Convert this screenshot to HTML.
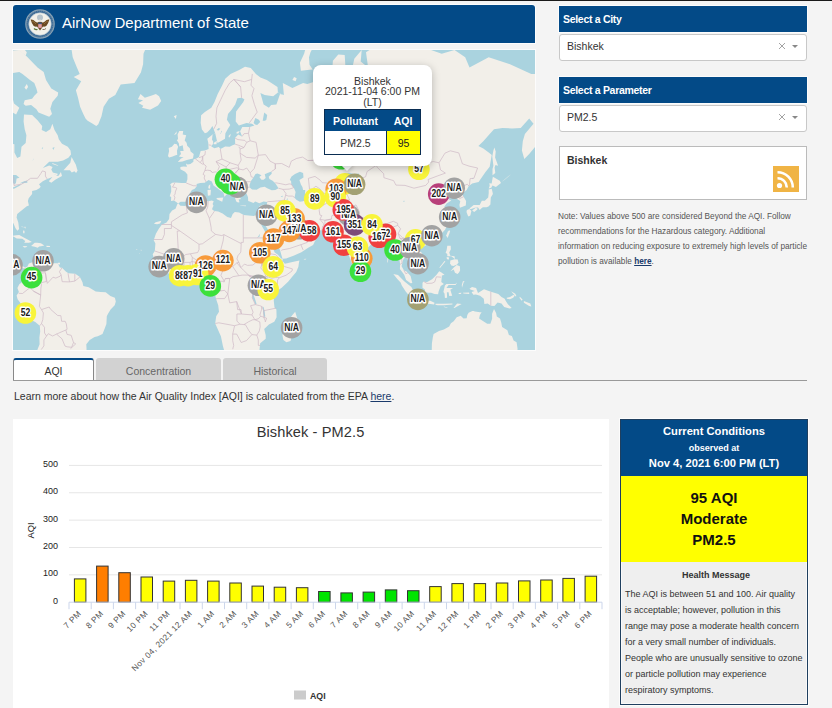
<!DOCTYPE html>
<html><head><meta charset="utf-8">
<style>
*{box-sizing:border-box;margin:0;padding:0}
html,body{width:832px;height:708px;overflow:hidden;background:#f4f4f4;font-family:"Liberation Sans",sans-serif;color:#333}
.abs{position:absolute}
#topline{left:0;top:0;width:832px;height:1px;background:#1a1a1a}
#hdr{left:13px;top:5px;width:522px;height:38px;background:#034a87;border-radius:3px 3px 0 0;box-shadow:0 0 0 1px rgba(255,255,255,0.8)}
#hdr .t{position:absolute;left:49px;top:9px;font-size:15px;color:#fff;white-space:nowrap}
#map{left:13px;top:50px;width:522px;height:300px;background:#aad3df;overflow:hidden;box-shadow:0 0 0 1px rgba(255,255,255,0.7)}
.sel-h{left:559px;width:248px;height:26px;background:#034a87;box-shadow:0 0 0 1px rgba(255,255,255,0.7);color:#fff;font-weight:bold;font-size:10.5px;letter-spacing:-0.3px;padding:7px 0 0 4px;white-space:nowrap}
.sel{left:559px;width:248px;height:27px;background:#fff;border:1px solid #c8c8c8;border-radius:3px;font-size:10.5px;color:#333;padding:5px 0 0 7px}
.sel .x{position:absolute;left:218px;top:7px}
.sel .ar{position:absolute;left:232px;top:10px;width:0;height:0;border-left:3.5px solid transparent;border-right:3.5px solid transparent;border-top:3.5px solid #888}
#cityBox{left:559px;top:146px;width:248px;height:54px;background:#fff;border:1px solid #bbb}
#cityBox .n{position:absolute;left:7px;top:7px;font-weight:bold;font-size:10.5px;color:#333}
#rss{left:773px;top:166px}
#note{left:558px;top:209px;width:274px;white-space:nowrap;font-size:8.25px;line-height:15px;color:#555}
#note a{color:#1a3a6b;font-weight:bold;text-decoration:underline}
.tab{top:358px;height:22px;font-size:10.5px;text-align:center;padding-top:7px;color:#666;background:#d2d2d2;border-radius:3px 3px 0 0}
#tab1{left:13px;width:81px;background:#fff;border:1px solid #888;border-top:2px solid #034a87;border-bottom:none;color:#333;padding-top:5px}
#tabline{left:13px;top:380px;width:794px;height:1px;background:#999}
#learn{left:14px;top:390px;font-size:10.5px;color:#333;white-space:nowrap}
#learn a{color:#1a3a6b;text-decoration:underline}
#chart{left:13px;top:419px;width:596px;height:289px;background:#fff}
#cc{left:620px;top:419px;width:188px;height:286px;border:1px solid #1f3f5f;box-shadow:0 0 0 1px rgba(255,255,255,0.7),inset 0 0 0 1px rgba(255,255,255,0.6);background:#efefef}
#cch{position:absolute;left:0;top:0;width:186px;height:56px;background:#034a87;color:#fff;font-weight:bold;text-align:center}
#ccy{position:absolute;left:0;top:56px;width:186px;height:86px;background:#ffff00;color:#111;font-weight:bold;text-align:center;font-size:15px;line-height:21px;padding-top:10.5px}
#hm{position:absolute;left:0;top:142px;width:186px;font-size:9px;color:#333;padding:0 0 0 4px;white-space:nowrap}

#popup{left:313px;top:65px;width:119px;height:101px;background:#fff;border-radius:8px;box-shadow:0 2px 8px rgba(0,0,0,0.25);font-size:10.5px;color:#333;text-align:center;line-height:10.8px;padding-top:10.5px}
#ptip{left:342px;top:159px;width:10px;height:10px;background:#fff;transform:rotate(45deg);box-shadow:2px 2px 4px rgba(0,0,0,0.15)}
#ptab{position:absolute;left:11px;top:44px;width:97px;height:46px;border:1px solid #0a2d52;border-collapse:collapse}
#ptab .h{position:absolute;left:0;top:0;width:95px;height:21px;background:#034a87;color:#fff;font-weight:bold}
#ptab .r{position:absolute;left:0;top:21px;width:95px;height:23px;background:#fff}
</style></head><body>
<div id="topline" class="abs"></div>
<div id="hdr" class="abs">
  <svg class="abs" style="left:12px;top:4px" width="30" height="30" viewBox="0 0 30 30">
    <circle cx="15" cy="15" r="14.8" fill="#8aa2b4"/>
    <circle cx="15" cy="15" r="13.6" fill="#3f6c96"/>
    <circle cx="15" cy="15" r="13" fill="none" stroke="#9fb6c6" stroke-width="0.5" stroke-dasharray="0.8 1.2"/>
    <circle cx="15" cy="15" r="11.2" fill="#f3f1ea" stroke="#b9c9d4" stroke-width="0.6"/>
    <circle cx="15" cy="8.6" r="3" fill="#b7c4cc"/>
    <path d="M5.6 10.5 Q8 10 10.5 12.8 Q12 14 13 13.2 L15 12.2 L17 13.2 Q18 14 19.5 12.8 Q22 10 24.4 10.5 Q23.5 14 21.5 16.8 Q19.5 18 18 17.5 L15 21.5 L12 17.5 Q10.5 18 8.5 16.8 Q6.5 14 5.6 10.5Z" fill="#6b4a22"/>
    <path d="M7 12 Q9 12.5 11 15 M23 12 Q21 12.5 19 15" stroke="#a07a40" stroke-width="0.7" fill="none"/>
    <rect x="13.2" y="13.6" width="3.6" height="1.6" fill="#3b5a8a"/>
    <rect x="13.2" y="15.2" width="3.6" height="3.6" fill="#d0707a"/>
    <path d="M14 15.2V18.8M15 15.2V19M16 15.2V18.8" stroke="#f4e8e8" stroke-width="0.45"/>
    <path d="M9 19.5 Q10.5 21 12.5 20.5" stroke="#5c7a3a" stroke-width="1.2" fill="none"/>
    <path d="M21 19.5 Q19.5 21 17.5 20.5" stroke="#7a6a50" stroke-width="0.9" fill="none"/>
    <circle cx="15" cy="11.8" r="1.2" fill="#e8e4d8"/>
  </svg>
  <div class="t">AirNow Department of State</div>
</div>
<div id="map" class="abs"><svg width="522" height="300" viewBox="0 0 522 300" style="position:absolute;left:0;top:0">
<rect width="522" height="300" fill="#aad3df"/>
<path fill="#f2efe9" d="M-121.7,23.9 -121.7,203.6 -19.3,204.7 -9.7,208.0 -5.8,213.5 -5.8,214.8 -3.7,215.4 -1.3,217.8 2.1,218.4 5.5,220.4 6.1,218.2 7.4,216.9 10.2,218.2 12.1,219.1 11.9,222.1 11.7,227.5 8.9,232.2 6.3,234.3 4.4,238.1 5.9,242.0 3.6,245.6 4.6,249.3 7.4,253.1 10.6,258.5 14.2,264.6 16.6,269.3 22.3,272.1 26.8,275.7 27.2,281.4 26.4,287.6 26.6,294.2 24.5,299.5 24.5,329.3 74.6,329.3 73.5,298.3 73.3,294.2 76.7,289.9 81.6,287.1 84.8,286.2 89.5,284.1 91.7,278.4 93.4,273.9 93.8,266.2 94.9,264.0 97.6,259.6 101.7,255.3 102.8,251.4 101.9,247.8 97.4,246.0 92.7,242.2 87.8,242.0 82.7,241.5 75.7,237.3 70.3,236.0 69.5,232.2 66.9,227.0 62.2,223.8 55.4,223.2 52.8,221.5 49.0,217.8 46.9,217.6 44.7,213.3 40.5,213.3 36.2,213.5 31.5,213.5 27.7,209.8 24.5,212.4 23.4,210.6 20.6,211.7 15.9,213.5 14.2,216.7 12.1,217.6 8.5,215.6 4.2,216.9 1.4,216.1 -1.6,212.6 -1.1,209.1 -0.5,203.6 -4.3,201.4 -10.7,201.9 -11.4,195.8 -9.7,189.0 -15.9,190.2 -16.1,193.6 -19.3,195.4 -24.6,196.5 -31.0,187.9 -30.4,178.5 -29.9,173.7 -23.5,169.6 -15.0,170.8 -13.3,168.1 -8.6,167.9 -5.0,169.6 -2.2,168.9 0.6,173.7 2.5,178.3 4.4,180.7 6.1,179.0 5.3,172.5 3.6,167.6 4.2,163.9 8.5,160.6 13.8,156.2 15.9,155.4 14.9,150.9 15.7,148.2 19.1,144.1 19.1,141.1 23.4,139.9 26.4,138.2 27.7,136.8 26.0,134.2 29.8,131.3 34.1,128.9 36.2,128.3 39.4,127.1 35.8,131.3 38.3,132.7 42.6,129.5 49.0,126.1 47.9,122.1 45.8,125.5 44.7,126.1 40.5,123.7 38.3,119.6 39.6,117.0 36.2,115.4 29.8,118.0 36.2,111.8 44.7,111.8 50.1,110.5 55.4,107.7 58.0,104.6 57.5,100.4 54.8,96.8 49.0,93.8 45.8,89.2 44.7,85.3 41.5,80.1 39.4,73.7 37.3,79.2 33.0,82.1 28.7,80.1 29.2,75.9 24.5,70.3 19.1,64.9 11.0,64.4 10.6,71.6 11.7,79.2 13.4,85.3 12.7,93.0 8.5,96.8 7.4,106.4 4.2,108.1 1.4,102.5 1.4,94.2 -4.3,93.8 -10.7,89.2 -20.3,86.1 -23.5,80.5 -25.2,77.1 -24.0,70.7 -21.4,66.2 -16.1,59.2 -9.7,54.9 -7.5,44.1 -4.3,42.5 -1.1,32.9 -0.1,28.2 -4.3,25.1 -12.9,32.9 -25.7,35.8 -121.7,23.9Z"/><path fill="#f2efe9" d="M25.5,62.5 36.2,66.7 39.0,63.9 37.3,58.8 39.4,51.9 44.7,45.7 45.2,42.5 38.3,38.6 33.0,30.0 30.7,22.0 24.5,17.5 13.8,6.6 6.3,-0.0 -4.3,0.7 -11.8,10.8 -6.5,20.7 -2.2,23.3 6.3,22.0 9.5,23.9 17.0,30.0 21.3,32.9 23.4,38.6 24.5,42.5 21.3,45.7 19.1,48.8 11.7,50.3 10.6,53.9 12.7,55.8 18.1,54.9 23.4,59.2 25.5,62.5Z"/><path fill="#f2efe9" d="M6.3,57.8 3.1,64.4 -2.2,61.6 -6.9,56.3 -6.0,47.8 -1.1,45.7 1.0,53.4 6.3,57.8Z"/><path fill="#f2efe9" d="M21.3,-34.3 36.2,-20.4 53.3,-18.6 57.5,-7.8 59.7,7.3 63.9,17.5 66.7,23.9 60.7,27.0 68.2,31.2 62.9,40.3 65.0,47.8 67.1,56.8 70.3,63.9 72.5,68.5 74.6,70.7 78.9,73.3 83.3,75.9 85.3,74.2 88.5,66.2 90.6,56.8 95.9,48.8 102.3,45.1 107.7,34.6 121.5,32.9 127.9,22.6 130.1,14.2 130.5,3.7 135.4,-7.8 136.5,-20.4 140.7,-39.4 134.3,-74.7 91.7,-105.5 49.0,-89.2 21.3,-39.4Z"/><path fill="#f2efe9" d="M129.0,57.8 130.3,55.8 125.4,52.9 130.1,50.3 124.9,49.3 127.5,44.1 131.8,47.8 138.0,45.7 142.9,44.1 146.1,46.2 148.2,50.9 145.0,55.4 137.1,59.7 129.0,57.8Z"/><path fill="#f2efe9" d="M164.8,112.1 169.5,111.5 173.8,110.1 180.0,108.4 180.7,103.9 177.6,101.5 176.8,98.2 174.2,95.7 173.6,92.7 171.7,90.4 173.2,85.3 169.7,84.5 170.2,80.9 166.3,80.9 164.6,84.5 165.1,89.2 163.8,90.0 165.9,93.4 166.3,96.4 169.7,95.3 170.6,101.1 167.2,101.1 168.0,103.9 165.9,106.4 170.6,107.4 168.0,108.4 164.8,112.1Z"/><path fill="#f2efe9" d="M164.2,105.0 164.0,100.8 165.1,96.8 163.8,94.2 161.4,93.8 158.9,96.8 155.7,97.9 156.1,101.1 155.0,106.0 156.1,107.4 158.9,106.7 163.3,105.0Z"/><path fill="#f2efe9" d="M165.1,153.6 163.6,152.3 161.0,150.4 158.0,150.9 158.2,146.9 156.7,146.3 158.2,141.4 158.2,136.5 157.2,134.2 159.3,132.7 162.1,132.4 168.5,133.0 173.2,133.0 174.4,129.2 174.4,124.6 172.1,121.8 167.4,119.3 167.4,117.0 170.6,116.4 174.0,116.7 172.9,113.5 174.7,114.4 177.4,114.1 180.4,111.8 180.4,109.4 183.4,108.4 186.0,107.1 186.8,103.9 187.7,101.1 191.9,100.4 195.6,99.0 195.3,93.0 194.3,88.8 199.6,84.5 202.2,83.3 200.7,79.2 199.4,75.9 197.3,79.2 194.1,82.5 191.9,83.3 188.9,79.6 187.7,72.9 188.1,65.3 191.9,62.1 198.3,57.8 201.5,51.9 204.7,44.1 209.0,35.8 212.2,28.8 217.5,23.9 226.1,20.1 232.0,16.8 237.8,18.1 242.9,23.9 247.4,27.6 253.8,30.0 264.5,36.9 264.9,42.5 270.9,45.1 269.8,32.9 275.1,35.8 279.4,38.1 290.1,32.9 294.3,34.1 302.9,31.2 306.1,25.1 313.5,28.2 319.9,32.3 323.1,34.6 319.3,18.8 319.9,10.8 325.3,4.4 331.7,5.1 332.3,14.2 331.7,27.0 333.8,32.9 337.0,28.8 341.3,8.7 348.7,-0.0 347.7,11.4 355.1,17.5 353.0,2.2 362.6,-3.8 369.0,-16.0 386.1,-22.1 398.9,-36.3 418.1,-0.0 428.7,3.7 441.5,-0.0 452.2,7.3 456.5,17.5 475.7,7.3 497.0,14.2 518.3,23.9 539.7,23.9 582.3,35.8 582.3,66.2 529.0,75.0 525.8,91.2 522.2,96.8 516.2,103.9 511.3,109.1 508.9,100.4 509.8,91.2 511.9,84.1 520.5,73.7 516.2,68.5 507.7,78.0 499.1,78.4 489.5,78.0 481.0,79.2 476.7,84.1 470.3,91.2 465.4,96.0 470.3,98.6 476.7,103.2 478.7,105.0 476.7,116.7 472.5,122.1 465.6,131.9 459.2,133.6 455.8,135.9 453.7,139.9 450.1,142.7 449.0,144.1 453.1,150.9 452.8,155.4 446.9,157.8 446.4,154.9 447.3,150.9 443.7,148.8 442.6,143.3 436.8,144.1 435.6,146.1 437.7,141.4 435.1,140.5 431.9,143.3 428.3,145.5 430.4,150.1 434.5,148.8 438.3,150.4 433.6,153.6 431.3,156.7 434.7,162.6 437.1,166.4 437.1,169.1 434.7,174.0 432.1,179.7 427.7,184.2 420.8,186.9 414.9,189.0 412.3,191.3 411.0,189.0 407.4,189.0 404.6,191.8 402.7,194.9 405.3,200.3 409.1,203.0 410.2,209.1 409.5,211.7 404.8,213.9 401.2,217.6 400.6,213.7 397.8,213.3 395.2,209.8 392.3,207.1 390.1,209.8 388.6,216.3 391.0,220.4 393.5,221.5 397.6,226.0 399.3,233.0 397.6,233.2 393.1,230.0 391.2,224.7 386.9,219.1 387.1,214.3 385.2,200.3 380.3,201.9 378.2,200.7 378.6,194.7 373.7,190.2 373.1,186.9 370.1,187.9 366.9,188.3 362.4,190.6 359.4,192.9 352.6,200.3 348.3,201.9 348.3,207.4 347.2,213.9 343.8,216.9 342.3,218.7 339.8,215.2 337.0,208.5 333.4,198.1 332.3,194.7 331.9,189.7 327.4,190.6 324.2,186.9 326.3,186.0 322.9,184.2 319.9,181.4 318.4,179.7 308.2,180.4 299.2,179.0 297.1,175.9 297.3,177.8 298.0,182.5 302.0,184.2 304.6,186.7 301.8,191.5 300.1,194.9 295.2,197.8 288.4,202.3 280.5,205.8 273.0,208.5 269.8,208.7 269.4,210.9 271.9,213.7 279.4,212.0 286.4,210.6 285.8,213.7 285.4,216.7 283.2,222.1 279.4,226.4 275.1,231.7 268.7,237.7 265.7,239.8 262.8,242.4 260.8,246.7 260.8,251.0 261.5,257.4 263.4,259.6 263.6,267.3 261.3,271.7 255.9,274.6 251.2,279.1 252.7,285.3 252.7,288.8 247.2,293.2 246.5,299.5 245.3,315.8 215.4,315.8 209.9,295.9 207.9,286.2 202.2,273.5 203.2,266.2 206.0,261.8 205.2,255.3 203.0,248.8 202.2,245.6 197.3,240.3 196.8,236.0 197.9,229.6 197.3,227.5 195.1,226.2 190.9,226.8 186.6,222.5 184.3,222.3 179.6,223.0 172.7,226.0 168.5,224.9 161.0,226.6 156.7,224.2 152.5,221.2 148.6,217.8 145.0,212.8 141.2,209.1 139.7,204.3 141.8,201.0 142.4,193.6 140.7,190.2 142.9,183.7 146.1,178.3 148.8,174.7 153.5,172.5 156.1,169.1 156.5,163.9 159.1,160.6 162.5,158.8 164.4,154.1 165.1,153.6Z"/>
<path fill="#aad3df" d="M165.1,153.6 167.6,151.7 172.5,151.7 175.5,149.3 177.4,146.1 176.4,144.1 178.9,139.9 181.7,138.8 183.8,136.2 183.6,133.9 187.2,133.0 191.7,132.7 195.6,130.1 198.8,131.6 200.5,135.4 203.7,137.7 207.3,140.5 210.5,142.7 211.6,147.4 210.3,148.2 212.4,145.8 213.7,144.4 213.1,141.6 216.5,142.5 215.4,140.8 213.1,139.4 210.7,137.4 207.9,136.5 205.8,132.4 203.2,129.8 203.5,127.1 206.0,126.1 206.7,128.9 209.0,130.4 212.0,132.7 216.5,135.9 218.6,137.7 218.4,141.9 220.1,144.1 221.8,147.4 223.3,151.5 225.0,152.5 226.5,152.3 225.6,149.6 228.2,149.1 226.1,146.9 225.9,141.1 228.2,140.8 232.5,140.5 232.9,142.7 234.0,144.7 235.0,147.2 235.2,150.9 237.4,151.7 240.4,153.1 242.3,151.5 246.3,153.3 250.6,151.5 254.2,152.0 253.6,155.4 252.7,159.0 251.7,161.9 250.2,165.6 245.9,165.9 243.1,164.9 240.8,165.9 235.7,165.6 230.8,164.9 226.1,162.4 221.8,161.9 219.7,163.9 218.0,168.1 214.3,166.9 209.6,163.4 205.2,161.6 201.5,161.1 199.4,159.8 199.2,158.5 200.5,155.7 199.6,154.1 200.7,151.2 198.8,150.4 195.3,151.2 190.9,150.7 183.4,151.5 179.6,152.3 175.7,154.1 172.3,155.9 167.4,155.7 165.7,153.8 165.1,153.6Z"/><path fill="#aad3df" d="M239.1,139.4 236.7,137.4 236.5,135.1 238.0,131.0 240.4,127.4 242.5,124.0 244.6,123.4 248.5,125.2 246.3,127.1 248.5,129.8 250.6,129.8 252.7,128.0 252.3,126.4 251.7,124.3 255.1,122.8 258.5,121.5 258.7,123.7 255.7,126.8 256.4,128.9 259.6,130.7 262.1,133.0 265.5,138.2 262.3,139.9 258.7,140.2 254.2,138.2 251.7,136.8 247.4,137.4 243.6,139.7 239.1,139.4Z"/><path fill="#aad3df" d="M276.8,129.8 278.5,126.4 282.0,124.0 286.9,121.8 290.1,123.1 290.5,127.4 286.4,130.1 287.9,134.5 289.4,137.1 290.1,139.9 292.2,139.9 292.0,144.7 292.0,150.1 290.1,151.2 286.9,151.7 283.7,149.9 281.5,147.7 282.6,141.9 280.9,138.0 278.3,134.2 278.1,131.3 276.8,129.8Z"/><path fill="#aad3df" d="M199.6,84.5 199.0,89.6 200.3,91.9 198.3,96.4 201.5,98.2 205.8,97.1 207.5,99.0 212.2,96.4 216.7,96.8 219.5,95.3 222.2,94.2 222.0,88.1 225.2,84.5 229.1,86.5 227.1,81.3 229.3,77.1 236.7,77.1 241.4,75.5 238.9,73.7 233.5,72.9 225.9,75.5 222.7,71.6 223.1,61.6 230.3,51.9 231.4,49.3 228.6,47.8 224.4,48.3 222.2,54.4 218.6,59.7 215.0,63.9 213.9,69.8 217.3,75.0 215.4,78.0 212.4,83.3 212.0,88.8 207.7,91.2 204.5,93.0 203.9,90.4 202.2,83.3 199.6,84.5Z"/><path fill="#aad3df" d="M264.9,42.5 260.2,46.2 251.7,45.1 247.4,43.0 250.6,54.4 255.9,57.8 258.1,54.9 263.4,54.4 267.0,44.1 270.9,45.1 264.9,42.5Z"/><path fill="#aad3df" d="M280.5,168.9 283.9,169.1 285.4,171.6 286.7,174.0 290.1,176.6 293.9,177.3 297.1,175.7 297.3,177.8 296.5,180.2 295.0,180.4 293.3,182.5 289.2,182.8 287.1,182.8 287.1,179.0 286.0,178.3 285.4,181.4 284.1,179.0 282.8,176.4 280.5,173.3 279.4,170.3 280.5,168.9Z"/><path fill="#aad3df" d="M246.5,169.1 248.5,173.3 250.2,174.2 251.5,170.1 251.0,173.7 252.7,176.1 256.4,182.1 259.3,186.7 260.6,189.0 263.4,193.6 267.0,199.9 268.3,204.7 269.6,208.9 269.2,209.1 267.7,208.0 264.9,204.7 261.7,202.5 259.8,198.1 256.8,193.6 256.4,190.2 253.8,186.7 252.9,183.5 250.6,179.0 248.7,175.7 246.5,169.1Z"/>
<path fill="#f2efe9" d="M347.2,218.7 347.9,215.0 350.4,217.8 351.7,220.6 351.1,222.5 348.9,223.4 347.7,222.1Z"/><path fill="#f2efe9" d="M408.7,194.3 411.9,192.2 413.8,193.3 412.5,195.8 410.6,196.5 408.7,195.6Z"/><path fill="#f2efe9" d="M433.2,185.6 434.5,187.9 435.1,186.7 436.4,183.2 437.1,180.9 436.2,180.2 434.7,181.8Z"/><path fill="#f2efe9" d="M434.3,195.8 437.7,195.8 437.9,199.2 436.2,202.5 437.3,205.8 441.5,206.3 442.0,208.9 438.3,206.3 436.6,206.3 434.3,206.3 434.3,204.1 432.6,202.7 433.6,200.3Z"/><path fill="#f2efe9" d="M433.6,206.9 436.2,207.6 435.6,209.8 433.9,208.9Z"/><path fill="#f2efe9" d="M427.0,218.0 432.4,211.5 431.5,211.1 426.4,217.4Z"/><path fill="#f2efe9" d="M437.3,210.6 441.5,209.3 444.7,209.6 445.4,212.4 444.1,214.6 440.5,216.1 438.3,215.6 437.1,213.3Z"/><path fill="#f2efe9" d="M437.5,221.2 440.5,217.8 443.7,215.0 446.9,216.3 447.1,220.4 446.0,222.5 444.5,224.0 442.0,222.7 440.7,219.5Z"/><path fill="#f2efe9" d="M409.5,232.8 410.8,231.5 413.8,232.2 419.1,229.2 423.4,224.9 426.2,221.2 428.1,222.3 431.5,224.7 428.9,225.5 428.3,231.9 430.9,234.1 427.7,236.0 425.7,241.3 425.1,244.3 421.5,244.1 418.1,242.8 415.3,242.8 412.1,242.2 411.9,239.6 409.5,237.7Z"/><path fill="#f2efe9" d="M380.3,224.0 385.0,224.9 391.2,231.3 398.4,236.9 399.9,240.1 403.1,242.4 402.9,248.4 400.1,248.6 395.2,244.5 392.7,241.5 388.8,235.6 387.6,232.4 384.1,228.7Z"/><path fill="#f2efe9" d="M401.4,250.5 403.3,248.6 408.0,249.5 412.5,250.8 417.2,250.8 421.5,252.7 421.1,254.6 413.8,253.6 407.4,252.7 401.9,251.0Z"/><path fill="#f2efe9" d="M422.5,253.8 430.9,253.8 439.4,253.6 439.4,254.6 430.9,255.3 424.5,255.3 422.5,254.8Z"/><path fill="#f2efe9" d="M441.5,257.9 448.6,254.0 444.1,253.6 440.5,258.1Z"/><path fill="#f2efe9" d="M430.9,256.4 434.7,257.7 434.1,258.1 430.9,257.0Z"/><path fill="#f2efe9" d="M430.4,242.0 431.9,235.4 433.4,234.1 442.4,233.9 444.1,232.6 442.6,235.1 435.6,235.1 433.4,237.9 436.4,237.9 440.0,237.9 437.3,239.8 439.2,245.8 436.2,246.0 435.6,242.2 433.9,242.2 434.1,247.8 431.9,248.0 431.5,243.5Z"/><path fill="#f2efe9" d="M449.0,237.7 450.5,232.8 451.6,231.1 449.9,231.3 448.8,234.9Z"/><path fill="#f2efe9" d="M449.9,242.8 456.0,242.4 456.3,244.1 450.5,243.5Z"/><path fill="#f2efe9" d="M445.6,243.0 448.4,242.8 447.9,244.1 445.8,243.9Z"/><path fill="#f2efe9" d="M456.5,238.8 459.0,236.9 463.1,237.9 465.0,243.0 471.0,239.2 477.2,241.5 485.3,244.1 488.5,247.1 491.7,248.8 492.5,250.5 494.9,254.2 498.7,258.1 496.4,258.5 491.2,257.0 488.5,253.6 484.6,252.5 481.4,255.9 478.0,255.7 474.6,253.6 471.4,254.0 470.8,248.8 467.1,245.8 462.9,244.5 460.3,244.8 458.6,242.0 461.8,240.9 457.5,239.4Z"/><path fill="#f2efe9" d="M493.8,247.8 497.0,247.1 500.2,245.0 501.9,245.6 500.2,247.8 497.0,249.3 493.8,248.8Z"/><path fill="#f2efe9" d="M498.1,241.3 502.3,243.7 503.4,246.0 502.8,246.5 500.2,243.7Z"/><path fill="#f2efe9" d="M506.8,246.7 509.6,249.5 508.7,250.8 506.6,248.0Z"/><path fill="#f2efe9" d="M510.9,251.0 517.3,253.6 518.3,256.4 516.2,256.1 510.9,252.7Z"/><path fill="#f2efe9" d="M418.9,293.5 419.8,287.6 420.6,284.1 426.0,280.9 430.9,279.6 436.2,276.4 437.9,273.3 440.7,271.3 443.7,267.3 447.7,265.7 450.5,268.4 453.7,268.2 454.3,265.1 455.6,262.7 459.9,260.7 458.4,260.3 462.0,261.4 466.9,262.2 468.6,262.2 466.9,265.1 466.1,268.4 470.3,271.3 474.2,273.7 477.4,273.7 479.1,268.8 479.1,263.8 481.0,259.0 483.1,262.9 483.8,266.6 487.0,268.4 488.3,272.8 489.1,277.1 494.4,280.2 495.9,285.1 498.9,286.0 500.6,290.4 503.6,292.3 504.5,298.3 504.5,329.3 418.1,329.3Z"/><path fill="#f2efe9" d="M282.2,261.8 284.5,269.5 283.0,272.8 281.3,278.0 278.5,287.6 277.5,290.9 273.4,292.3 270.4,289.9 269.4,285.3 271.7,279.1 270.9,274.6 271.7,271.0 275.8,269.9 279.2,265.3Z"/><path fill="#f2efe9" d="M290.7,209.1 293.3,208.7 292.8,209.6 291.1,209.6Z"/><path fill="#f2efe9" d="M456.3,159.0 457.3,157.8 460.7,154.9 466.7,154.9 468.8,150.7 471.8,150.7 475.2,147.4 475.7,143.3 475.7,139.4 478.7,138.8 479.5,141.9 479.9,144.1 477.8,147.4 477.6,150.9 477.4,154.4 475.5,156.5 473.5,157.2 469.9,157.2 468.8,158.0 466.7,160.1 465.0,157.5 461.8,157.8 458.2,159.0Z"/><path fill="#f2efe9" d="M453.9,160.1 456.5,159.0 458.4,161.1 457.3,165.4 455.6,166.4 454.8,165.6 453.5,162.1Z"/><path fill="#f2efe9" d="M459.2,160.6 462.4,158.0 464.4,158.3 464.4,159.6 461.2,161.9Z"/><path fill="#f2efe9" d="M475.7,138.5 478.2,137.7 479.5,135.4 482.9,137.1 488.0,133.0 486.8,130.7 479.9,126.8 479.1,130.7 478.7,133.6 476.3,133.3 476.7,135.7Z"/><path fill="#f2efe9" d="M479.5,125.2 482.3,123.1 481.6,117.4 482.5,115.1 485.1,115.7 482.1,107.4 482.7,101.5 481.4,97.5 480.4,100.4 479.3,106.4 480.4,115.7 479.5,119.0Z"/><path fill="#f2efe9" d="M287.9,20.7 294.3,20.1 299.7,19.4 296.5,14.8 296.0,7.3 297.5,2.2 302.9,-7.8 309.3,-17.7 322.1,-28.6 318.9,-31.4 302.9,-22.1 294.3,-7.8 291.1,3.7 286.9,12.8Z"/><path fill="#f2efe9" d="M301.8,23.9 306.1,25.1 307.1,22.0 302.9,20.7Z"/><path fill="#f2efe9" d="M279.4,30.0 282.6,31.2 283.7,28.2 281.1,27.0Z"/><path fill="#f2efe9" d="M-4.1,188.1 -0.5,185.8 3.1,185.3 6.3,185.1 11.7,188.1 15.5,189.9 18.9,192.0 15.7,192.7 11.2,192.7 12.3,191.1 9.3,188.8 3.8,188.6 0.4,186.5Z"/><path fill="#f2efe9" d="M18.1,196.1 21.7,192.7 24.3,192.7 27.9,193.3 31.3,195.6 29.4,196.1 26.2,196.5 24.7,197.8 21.7,196.7Z"/><path fill="#f2efe9" d="M9.7,196.1 14.4,196.3 13.2,197.2 11.2,197.4Z"/><path fill="#f2efe9" d="M33.4,195.8 37.1,196.1 36.8,197.0 33.6,197.0Z"/><path fill="#f2efe9" d="M10.0,180.4 11.5,180.7 11.5,183.2 10.2,183.2Z"/><path fill="#f2efe9" d="M8.5,176.6 10.8,176.9 10.8,177.3 8.5,177.1Z"/><path fill="#f2efe9" d="M11.7,176.4 12.7,177.1 12.3,178.8 11.5,177.6Z"/><path fill="#f2efe9" d="M44.9,212.8 47.1,212.8 46.9,214.6 44.9,214.3Z"/><path fill="#f2efe9" d="M50.5,120.2 57.3,112.8 58.6,107.1 62.9,114.8 63.9,118.6 64.6,120.6 63.1,123.1 61.4,121.2 58.8,122.4 56.9,120.2Z"/><path fill="#f2efe9" d="M39.4,113.1 45.4,115.4 44.7,115.7 39.4,114.1Z"/><path fill="#f2efe9" d="M39.6,122.4 44.7,123.7 44.3,125.2 40.0,124.3Z"/><path fill="#f2efe9" d="M11.5,37.5 13.8,34.1 15.1,36.9 13.2,39.7Z"/><path fill="#f2efe9" d="M5.3,-0.0 12.7,5.8 13.8,2.2 10.6,-1.5Z"/><path fill="#f2efe9" d="M203.5,148.0 210.3,147.4 209.2,151.7 203.9,149.3Z"/><path fill="#f2efe9" d="M194.5,139.9 197.9,139.7 197.5,145.2 194.9,145.8Z"/><path fill="#f2efe9" d="M195.3,138.2 197.1,138.8 197.3,134.2 195.6,135.7Z"/><path fill="#f2efe9" d="M227.1,155.4 233.1,155.4 232.7,156.2 227.3,155.7Z"/><path fill="#f2efe9" d="M245.9,156.5 250.8,154.4 249.5,156.2 247.4,157.2Z"/><path fill="#f2efe9" d="M181.9,143.9 184.5,143.0 183.8,144.7 182.3,144.4Z"/><path fill="#f2efe9" d="M200.5,93.0 203.9,90.8 203.5,94.2 200.9,94.2Z"/><path fill="#f2efe9" d="M197.7,93.0 200.0,92.7 199.4,94.9 197.9,94.5Z"/><path fill="#f2efe9" d="M215.6,86.1 217.7,83.7 217.3,86.1 216.0,87.7Z"/><path fill="#f2efe9" d="M223.5,82.1 226.7,80.9 225.6,83.3 223.7,83.7Z"/><path fill="#f2efe9" d="M161.0,84.9 163.8,81.3 163.3,84.1Z"/><path fill="#f2efe9" d="M140.9,173.7 142.7,172.3 148.4,170.8 147.1,173.5 144.1,174.2Z"/><path fill="#f2efe9" d="M123.2,199.0 124.5,199.4 123.7,200.1Z"/><path fill="#f2efe9" d="M127.9,199.6 128.6,200.3 127.9,201.0Z"/><path fill="#f2efe9" d="M126.4,203.0 127.1,203.4 126.4,203.8Z"/><path fill="#f2efe9" d="M160.8,66.2 163.6,64.9 162.9,68.9Z"/><path fill="#f2efe9" d="M374.5,206.7 375.4,206.7 375.0,211.3 374.3,213.3Z"/><path fill="#f2efe9" d="M488.5,131.9 494.7,126.8 498.1,124.3 491.7,129.8Z"/>
<path fill="#aad3df" d="M-19.3,123.1 -13.9,119.0 -11.8,116.4 -7.5,116.7 -3.9,121.5 -3.9,123.7 -7.5,123.7 -12.9,122.4Z"/><path fill="#aad3df" d="M-10.3,138.0 -9.7,129.8 -5.6,125.2 -3.9,125.8 -6.9,130.4 -7.5,135.7 -8.8,138.2Z"/><path fill="#aad3df" d="M-3.3,125.2 3.1,124.9 6.5,127.7 3.6,128.6 2.9,133.3 1.0,134.2 -1.1,131.3 -3.3,126.8Z"/><path fill="#aad3df" d="M-0.9,138.0 5.3,135.1 8.7,134.5 5.3,136.5 1.0,138.8Z"/><path fill="#aad3df" d="M6.8,133.3 11.7,131.0 14.2,130.7 14.4,132.7 9.5,133.3Z"/><path fill="#aad3df" d="M244.8,235.4 248.5,235.1 250.2,236.4 249.5,238.6 248.5,241.3 245.9,241.5 244.6,239.2Z"/><path fill="#aad3df" d="M239.3,243.0 239.9,243.0 242.1,249.3 243.6,254.0 242.3,254.6 241.0,251.0 239.3,247.8Z"/><path fill="#aad3df" d="M249.5,256.4 250.6,257.0 251.5,260.7 252.3,266.6 251.2,267.0 250.2,262.9 250.0,258.5Z"/><path fill="#aad3df" d="M253.6,226.2 254.4,226.6 254.9,230.7 254.2,230.9Z"/><path fill="#aad3df" d="M398.4,107.1 401.0,106.7 405.3,103.6 410.6,96.8 411.0,92.3 410.0,93.0 407.8,98.6 404.2,102.2 399.9,105.0Z"/><path fill="#aad3df" d="M333.8,123.7 335.9,122.8 341.3,124.0 346.0,123.4 345.1,126.1 340.2,125.2 335.9,127.1Z"/><path fill="#aad3df" d="M339.6,135.9 342.3,134.5 343.8,135.4 341.3,136.5Z"/><path fill="#aad3df" d="M240.6,72.9 242.3,68.0 245.9,69.8 247.2,72.0 244.2,75.0 242.1,74.6Z"/><path fill="#aad3df" d="M249.7,70.7 251.2,62.5 254.2,64.9 253.4,69.8 252.1,70.7Z"/><path fill="#aad3df" d="M203.5,80.1 205.6,78.0 207.3,78.8 205.6,80.5Z"/><path fill="#aad3df" d="M207.3,84.1 208.6,80.5 208.8,81.3 207.7,84.1Z"/><path fill="#aad3df" d="M244.0,188.3 247.2,183.5 246.5,186.3Z"/><path fill="#aad3df" d="M205.8,208.0 207.9,206.5 208.6,208.0 206.9,208.9Z"/><path fill="#aad3df" d="M175.9,222.1 177.4,221.0 176.6,217.8 174.9,217.2 175.3,220.0Z"/><path fill="#aad3df" d="M398.0,207.6 399.9,208.5 399.5,208.9 398.2,208.2Z"/><path fill="#aad3df" d="M459.0,128.3 460.3,127.7 459.9,129.2Z"/><path fill="#aad3df" d="M389.9,150.9 391.6,150.7 391.2,152.0Z"/><path fill="#aad3df" d="M273.6,149.6 274.9,148.0 274.3,150.4Z"/><path fill="#aad3df" d="M267.7,146.3 269.8,145.8 269.2,147.2Z"/><path fill="#aad3df" d="M-12.4,114.1 -11.4,111.8 -10.7,114.1Z"/><path fill="#aad3df" d="M19.6,110.5 21.1,108.1 20.2,110.1Z"/><path fill="#aad3df" d="M28.7,98.6 30.2,96.8 29.4,99.3Z"/><path fill="#aad3df" d="M39.4,97.9 41.5,97.1 40.5,100.0Z"/>
<path fill="none" stroke="#cfb9c6" stroke-width="0.7" d="M-25.7,115.7 -13.9,119.0 -3.9,122.8 1.0,127.4 1.0,135.4 8.5,134.2 14.2,130.7 17.6,128.3 24.5,128.3 27.7,123.7 29.4,120.9 32.4,121.8 32.4,126.1 34.1,128.9M-72.6,162.6 -59.8,165.6 -50.2,164.4 -42.7,171.3 -35.3,174.9 -30.4,178.5M-19.7,204.7 -19.3,197.4 -17.1,197.4 -13.3,197.2 -11.4,195.8M-13.3,201.6 -9.2,208.2M-10.7,201.9 -5.4,204.7 -0.5,203.6M-9.7,207.6 -3.3,209.8 -1.6,212.6M-5.8,212.4 -1.6,212.6M0.1,218.4 1.0,215.6M10.8,220.6 12.1,217.6M11.9,235.1 15.9,236.2 16.6,237.9 9.5,243.5 5.7,243.3M11.9,235.1 15.9,236.2 20.4,241.1 27.7,245.0 27.9,238.1 28.5,234.7 27.7,232.8 33.4,231.5 32.4,222.7 29.2,223.0 26.4,220.8 22.5,220.0 20.4,216.3 22.8,212.0M20.4,241.1 27.7,245.0 26.4,256.4 28.5,259.6 30.4,262.9 29.8,269.5 28.5,273.5 26.8,275.7M28.5,273.5 31.5,277.3 31.5,283.0 33.6,286.0 30.9,289.9 30.9,295.9 28.3,299.5M28.5,259.6 36.2,257.0 37.7,259.4 44.7,265.5 47.9,265.7 48.6,271.3 52.2,271.3 53.3,273.9 54.1,279.3 52.8,280.0 43.5,284.1 39.6,286.0 35.3,283.7 33.6,286.0M52.8,280.0 54.1,284.4 58.2,285.3 60.5,292.5 58.6,297.3 54.1,296.8 52.0,296.1 49.0,288.8 43.5,284.1M60.5,292.5 62.7,293.9 57.5,298.7M32.4,222.7 34.3,233.4 40.0,227.2 42.8,228.1 47.1,226.2 48.1,224.9 46.4,221.7 49.0,217.8M48.1,224.9 49.2,231.7 56.5,231.9 55.0,223.2M56.5,231.9 61.8,231.1 61.8,223.8M61.8,231.1 66.9,227.0M173.2,133.0 180.2,135.7 183.8,135.9M162.1,132.4 159.5,137.1 162.3,137.4 163.8,138.2 162.3,141.9 162.1,144.1 161.0,145.5 161.9,147.7 161.0,150.4M193.0,131.9 191.1,128.0 191.9,125.5 190.0,124.3 191.9,120.6 194.5,120.2 197.3,120.6 199.4,122.4 203.0,121.8 206.2,123.7 206.0,126.1M191.9,120.6 193.2,116.1 190.7,114.1 189.4,114.1 187.2,112.5 182.3,108.8M190.7,114.1 190.0,112.1 189.8,109.8 189.8,106.0 191.9,105.0 192.4,101.1M187.2,112.5 189.2,109.8 189.6,106.4 186.0,107.7M195.6,94.9 198.3,95.3M207.3,99.0 208.1,103.9 209.0,109.1 203.0,111.5 206.4,116.7 204.7,120.6M199.4,122.4 197.3,120.6M209.0,109.1 217.1,112.8 225.2,115.4 228.2,110.1 227.1,103.2 227.1,99.0 226.7,97.5 225.6,97.1M203.0,111.5 213.1,117.0 213.5,119.0 212.2,120.6 211.3,122.8 212.4,123.7 206.2,123.7M213.1,117.0 217.1,112.8M213.5,119.0 216.9,119.3 224.1,117.7 225.9,119.0 220.1,124.9 217.3,125.5 212.4,123.7M225.2,115.4 225.9,119.0 230.1,119.9 233.7,118.0 237.2,122.8 238.2,126.8 240.4,127.4M225.9,119.0 222.4,123.4 220.1,124.9M220.1,124.9 225.4,130.7 230.3,132.1 236.1,131.6 238.0,131.9M224.8,136.2 226.1,139.1 233.1,138.0 233.7,137.4 236.7,137.1M220.1,124.9 218.4,128.6 218.4,132.7 220.3,134.8 220.7,138.5 221.8,141.1 220.1,143.9M217.3,125.5 210.5,127.7 210.3,130.4 216.5,135.9M224.8,136.2 225.2,130.7M227.1,99.0 231.0,97.5 233.7,92.3 237.2,90.8 236.1,86.5 235.5,83.3 236.7,77.1M222.0,88.1 225.0,89.6 231.8,90.4 233.7,92.3M222.2,94.2 225.6,95.3 231.0,97.5M229.1,86.5 231.0,83.7 235.5,83.3M237.2,122.8 241.2,118.6 245.3,105.3 252.5,104.6 257.0,111.1 262.3,113.8 262.3,119.0 258.5,121.5M227.1,103.2 233.5,107.4 242.1,108.1 245.3,105.3M237.2,90.8 243.1,92.3 245.3,105.3M228.6,47.8 227.6,36.9 220.9,29.4 231.4,31.7 238.7,29.4 239.3,23.9M227.6,36.9 220.9,29.4 216.7,32.9 212.2,40.3 207.9,49.3 203.9,57.8 203.0,66.2 203.7,73.3 201.3,78.0 200.7,79.2M238.7,29.4 238.0,35.2 241.0,38.6 238.9,45.7 241.4,54.4 244.2,62.1 236.3,72.9M262.3,119.0 262.3,113.8 268.7,113.5 276.2,117.4 278.3,111.1 283.7,108.4 289.6,107.1 294.8,110.5 302.9,110.5 308.0,109.8 305.4,105.7 309.3,101.5 308.2,97.5 316.1,96.8 322.5,94.9 328.7,98.2 332.7,100.4 341.1,96.8 343.4,103.9 353.0,109.8 359.4,114.1 363.2,115.4M363.2,115.4 369.0,110.8 374.3,109.8 380.7,112.8 386.1,105.7 394.6,107.4 398.4,112.5 404.2,111.1 408.7,114.8 420.2,111.5 426.0,112.8 431.9,103.2 437.3,100.8 445.8,102.9 449.4,113.8 456.0,116.1 464.6,118.0 460.9,128.3 457.1,128.6 456.5,134.5 455.8,135.9M363.2,115.4 354.1,121.5 352.6,126.8 348.1,128.3 348.1,134.5 340.8,139.7 334.7,143.6 334.0,144.4 329.7,144.1 326.8,145.2 322.1,145.8M363.2,115.4 364.3,117.4 370.7,123.7 370.9,127.7 380.7,130.7 382.9,135.1 392.0,135.4 401.0,138.2 412.7,135.4 415.7,132.1 415.1,129.5 424.9,125.8 432.4,123.1 427.5,119.9 426.0,112.8M348.1,134.5 346.0,134.8 339.6,133.6 333.8,135.9 328.7,135.4 328.0,139.9 326.5,139.1M333.8,135.9 328.0,139.9 327.2,141.4 330.6,141.9 334.0,144.4M308.0,109.8 294.8,110.5M295.4,128.3 296.5,139.1 299.2,139.1 302.9,136.2 307.1,139.1 309.9,142.7 314.0,144.4 318.9,150.1 322.1,145.8 327.2,141.4M295.4,128.3 302.0,126.4 307.1,130.1 309.3,132.7 314.6,133.0 317.8,137.1 323.1,141.1 327.2,141.4 328.7,135.4M290.1,150.1 293.9,150.1 298.2,147.4 305.6,150.9 307.6,152.0 309.7,155.4 314.6,152.8 318.9,150.1M318.9,150.1 322.7,150.7 326.8,149.3 329.5,151.7 336.6,149.9 334.0,144.4M307.6,152.0 306.7,158.0 306.1,159.8 306.9,165.1 308.8,165.6 306.9,169.3 312.3,170.3 318.4,169.1 318.9,165.6 324.8,164.1 327.4,159.0 326.1,158.8 328.7,154.6 329.7,151.7 336.6,149.9M306.9,169.3 310.3,173.3 311.4,177.1 308.8,180.9M265.5,138.2 270.0,139.4 276.2,139.1 280.7,137.7 278.3,134.2 276.2,133.9 272.8,134.8 267.2,133.6 262.3,132.7M270.0,139.4 273.0,143.6 272.6,145.2 271.3,150.1 267.5,150.7 264.5,150.9 258.1,151.5 255.3,151.5 254.2,152.0M272.6,145.2 275.6,146.1 279.4,146.1 281.3,147.2 281.5,147.7M271.3,150.1 274.1,153.8 274.1,158.8 278.3,161.4 279.4,167.4 280.5,168.9M267.5,150.7 265.1,152.5 264.5,158.0 259.8,160.3 255.5,163.1 252.9,162.1 253.4,160.6 254.2,159.0 254.9,157.5 253.8,157.0M259.8,160.3 260.6,163.4 266.6,166.1 272.4,170.8 276.2,171.1 279.4,170.3M255.5,163.1 260.6,163.4 255.9,165.1 258.1,167.6 254.9,169.8 251.7,170.1M250.0,165.6 251.5,170.1M276.2,171.1 278.8,172.5 280.3,172.5M285.4,181.4 287.1,182.8 289.2,185.8 294.8,186.3 295.8,187.9 294.3,192.4 287.9,194.7 280.9,197.0 276.6,198.5 269.2,199.9 268.3,200.5M295.8,187.9 296.3,183.0 296.5,181.1M287.9,194.7 290.1,199.9M308.8,180.9 309.7,176.1 312.0,175.7 311.8,170.3 318.4,169.1M322.5,183.9 327.4,179.2 326.8,173.7 332.5,168.9 336.1,166.1 335.9,161.9 338.1,157.2 343.0,154.9M343.0,154.9 346.6,162.1 345.1,165.9 348.1,167.9 350.9,167.9 358.3,172.3 364.9,174.0 366.4,175.4 372.4,174.2 380.3,171.3 384.6,173.3 384.8,175.4 387.6,178.8 385.2,183.5 389.5,187.6 392.9,188.8 394.8,186.9 401.6,184.9 404.6,186.0 407.4,189.0M348.1,167.9 348.1,171.8 354.7,175.4 360.0,177.1 364.9,177.3 364.9,174.0M366.4,175.4 366.7,176.4 372.6,176.6 373.5,174.9 372.4,174.2M364.9,177.3 366.9,180.2 365.8,183.2 366.7,185.8 366.9,188.3M366.9,180.2 373.3,180.7 374.1,183.9 373.7,190.2M374.1,183.9 376.3,183.9 378.0,181.1 379.9,177.1 384.8,175.4M385.2,183.5 386.9,188.3 392.9,188.8M386.9,188.3 390.5,191.5 391.4,193.6 386.5,198.3 387.8,201.0 387.1,204.1 388.6,207.6 389.1,213.3 387.1,214.3M391.4,193.6 392.9,197.6 396.7,196.1 400.4,198.3 402.3,202.5 402.3,205.2 396.3,205.8 395.2,209.8M402.3,205.2 404.2,204.5 406.3,205.2 406.5,208.0 403.6,212.6 400.6,213.7M394.8,186.9 396.1,189.7 399.9,191.5 398.9,194.3 402.3,196.3 404.2,200.3 406.3,205.2M391.0,220.4 392.9,223.8 394.8,222.7M410.8,231.5 413.8,233.4 419.1,233.2 421.7,231.9 423.4,226.8 428.1,227.2M442.2,142.7 445.8,138.8 450.7,138.2 450.5,135.9 454.3,134.2 455.8,135.9M446.2,148.8 449.2,147.4 450.9,146.6M477.8,241.5 477.8,255.7M173.2,155.9 174.4,162.9 169.1,164.9 158.4,171.8 158.4,174.5 148.8,174.5M158.4,174.5 158.4,178.5 151.4,178.5 151.4,184.4 149.3,189.5 140.7,189.5M158.4,175.4 166.8,180.9 179.6,189.9 186.0,194.3 189.4,193.8 202.6,184.4 198.3,180.9 198.1,177.3 196.4,168.4 193.0,160.8 194.7,157.2 195.3,151.2M196.4,168.4 201.5,161.1M202.6,184.4 208.8,185.6 210.9,184.6 228.2,193.6 228.2,192.4 230.3,192.4 230.3,187.9 230.3,164.9M230.3,187.9 255.7,187.9M166.8,180.9 164.2,181.1 165.3,200.3 165.3,202.5 152.5,202.5 151.0,204.1 141.8,201.0M151.0,204.1 152.7,209.3 147.8,208.7 141.4,209.3M141.2,206.3 147.6,206.7 143.9,207.4 141.2,207.6M147.8,208.7 145.0,212.8M152.7,209.3 154.2,210.4 159.1,211.7 160.1,213.9 159.3,215.6 155.0,217.8 152.5,221.2M159.3,215.6 161.0,218.0 158.7,219.7 161.0,226.6M155.0,217.8 148.6,216.5M159.1,211.7 165.5,213.7 171.0,215.4 170.8,225.3M165.3,202.5 165.5,213.7M171.0,215.4 171.0,212.4 177.0,212.4 179.1,211.5M177.0,212.4 177.4,223.0M179.1,211.5 180.4,222.7M165.5,213.7 167.6,209.1 172.7,204.5 177.4,203.8 179.3,207.4 181.7,208.9 184.7,210.9M179.3,207.4 179.1,211.5 182.8,212.4 184.7,210.9M182.8,212.4 182.8,222.3M186.0,194.3 186.0,199.6 184.7,202.5 177.4,203.8M184.7,210.9 191.9,208.0 198.3,207.4 203.2,207.8 206.0,206.5M210.9,184.6 210.1,190.8 206.0,206.5 208.1,209.8 207.9,212.4 210.3,214.6 206.7,215.4 210.1,220.0 212.2,219.1 216.5,216.9 219.7,216.5 223.9,212.8 225.9,212.4 223.9,208.9 225.0,205.6 227.8,202.1 228.2,193.6M195.1,226.2 197.5,222.1 202.2,221.0 205.2,214.6 208.1,209.8M210.1,220.0 207.9,225.3 211.3,231.3 210.9,232.4M197.9,231.1 201.1,231.1 211.3,231.3M197.9,233.9 201.1,233.9 201.1,231.1M201.1,233.9 205.2,233.2 207.7,240.9 204.3,240.1 201.5,242.8 202.2,245.6M207.7,240.9 211.6,240.3 214.8,243.9 216.7,228.5 215.4,228.3 212.2,228.7 211.3,231.3M212.2,228.7 216.7,228.5 220.1,226.6 225.9,225.7 229.3,225.1 235.5,225.1 236.5,226.6 243.1,227.9 249.3,227.7 252.9,226.2 258.7,228.3 262.3,227.5 264.5,227.5 266.4,227.7 264.5,230.0 264.5,239.6M219.7,216.5 225.9,225.7M223.9,212.8 227.8,217.6 230.3,220.0 235.5,225.1M225.9,212.4 227.8,217.6M228.2,217.4 231.4,214.1 234.6,215.4 239.9,215.0 246.1,209.8 249.3,215.6 249.5,212.6 254.9,205.2 255.7,201.4 259.1,197.0M235.5,225.1 241.0,228.5 243.1,227.9 246.1,228.5 249.3,227.7M249.5,212.6 247.8,218.0 251.0,221.9 252.9,226.2M254.9,205.2 257.9,203.8 262.8,204.7 266.6,208.5 269.4,210.9M266.6,208.5 266.2,212.0 268.7,212.4 269.4,210.9M266.2,212.0 271.9,216.7 279.4,218.9 279.0,221.0 273.0,225.3 266.4,227.7M214.8,243.9 216.7,252.9 223.7,251.6 224.6,259.6 228.0,259.6 228.4,264.0 223.9,264.0 223.9,271.0 226.9,274.2 221.6,275.7 205.8,272.8 202.2,273.5M203.0,248.8 204.7,248.6 211.6,248.6 214.8,243.9M223.7,251.6 228.4,264.0 238.9,264.9 240.1,262.2 237.6,255.7 242.3,254.6 239.3,247.8 239.7,245.4 240.6,239.0 241.2,238.3 240.1,234.7 243.8,231.5 242.7,228.5 240.1,226.2 235.5,225.1M226.9,274.2 231.0,274.6 235.7,271.7 239.9,269.7 241.9,269.7 245.3,268.8 247.8,266.2 246.8,265.3 248.5,259.6 248.7,256.4 246.8,255.7 242.3,254.6M238.9,264.9 241.9,269.7M231.0,274.6 232.5,274.8 235.9,280.7 238.9,284.6 243.8,285.1 246.3,280.9 247.2,276.8 246.8,271.9 241.9,269.7M221.6,275.7 219.7,284.1 219.7,290.6 220.7,295.4 219.7,299.2M219.7,284.1 223.7,284.1 228.2,292.5 233.5,290.6 238.9,284.6M243.8,285.1 245.3,289.9 245.3,295.4 247.2,295.4M247.8,266.2 253.6,268.2 252.3,271.9 252.1,270.4 250.8,267.5 250.8,260.7 263.2,258.1M248.7,256.4 250.8,260.7M240.1,238.3 249.3,238.1 257.2,242.4 260.6,246.0M249.3,238.1 249.3,235.8 251.7,231.9 252.9,226.2M239.7,245.4 242.7,243.0 242.1,241.1 240.6,239.0M242.1,241.1 239.1,242.0 238.7,241.1 240.1,239.0"/>
</svg><svg width="522" height="300" viewBox="0 0 522 300" style="position:absolute;left:0;top:0"><circle cx="-1.0" cy="214.8" r="10.8" fill="#a2a2a2"/><circle cx="30.0" cy="210.8" r="10.8" fill="#a2a2a2"/><circle cx="18.6" cy="227.6" r="10.8" fill="#3ce03c"/><circle cx="12.4" cy="263.0" r="10.8" fill="#f8f43a"/><circle cx="183.4" cy="152.4" r="10.8" fill="#a2a2a2"/><circle cx="224.2" cy="137.2" r="10.8" fill="#a2a2a2"/><circle cx="217.5" cy="133.8" r="10.8" fill="#3ce03c"/><circle cx="212.4" cy="129.3" r="10.8" fill="#3ce03c"/><circle cx="146.2" cy="216.6" r="10.8" fill="#a2a2a2"/><circle cx="160.7" cy="208.8" r="10.8" fill="#a2a2a2"/><circle cx="192.5" cy="216.0" r="10.8" fill="#f79a3a"/><circle cx="209.9" cy="210.6" r="10.8" fill="#f79a3a"/><circle cx="166.7" cy="225.7" r="10.8" fill="#f8f43a"/><circle cx="175.0" cy="225.7" r="10.8" fill="#f8f43a"/><circle cx="184.7" cy="224.5" r="10.8" fill="#f8f43a"/><circle cx="197.3" cy="235.9" r="10.8" fill="#3ce03c"/><circle cx="253.5" cy="165.2" r="10.8" fill="#a2a2a2"/><circle cx="286.0" cy="178.8" r="10.8" fill="#a2a2a2"/><circle cx="296.3" cy="180.8" r="10.8" fill="#f04040"/><circle cx="281.1" cy="168.9" r="10.8" fill="#f79a3a"/><circle cx="271.9" cy="160.8" r="10.8" fill="#f8f43a"/><circle cx="276.2" cy="181.4" r="10.8" fill="#f79a3a"/><circle cx="260.5" cy="189.0" r="10.8" fill="#f79a3a"/><circle cx="246.8" cy="202.8" r="10.8" fill="#f79a3a"/><circle cx="260.2" cy="216.9" r="10.8" fill="#f8f43a"/><circle cx="245.4" cy="235.3" r="10.8" fill="#a2a2a2"/><circle cx="255.2" cy="239.5" r="10.8" fill="#f8f43a"/><circle cx="278.6" cy="277.7" r="10.8" fill="#a2a2a2"/><circle cx="301.7" cy="148.9" r="10.8" fill="#f8f43a"/><circle cx="328.0" cy="108.8" r="10.8" fill="#3ce03c"/><circle cx="331.9" cy="133.8" r="10.8" fill="#f8f43a"/><circle cx="323.2" cy="139.2" r="10.8" fill="#f79a3a"/><circle cx="322.2" cy="146.8" r="10.8" fill="#f8f43a"/><circle cx="341.6" cy="134.3" r="10.8" fill="#a3a173"/><circle cx="335.7" cy="165.2" r="10.8" fill="#a2a2a2"/><circle cx="341.6" cy="174.9" r="10.8" fill="#7d4b78"/><circle cx="330.3" cy="159.8" r="10.8" fill="#f04040"/><circle cx="372.5" cy="184.3" r="10.8" fill="#f04040"/><circle cx="366.2" cy="187.3" r="10.8" fill="#f04040"/><circle cx="359.0" cy="174.9" r="10.8" fill="#f8f43a"/><circle cx="320.0" cy="181.8" r="10.8" fill="#f04040"/><circle cx="330.8" cy="195.3" r="10.8" fill="#f04040"/><circle cx="348.8" cy="208.3" r="10.8" fill="#f79a3a"/><circle cx="344.5" cy="197.4" r="10.8" fill="#f8f43a"/><circle cx="347.4" cy="221.3" r="10.8" fill="#3ce03c"/><circle cx="402.5" cy="189.8" r="10.8" fill="#f8f43a"/><circle cx="382.0" cy="200.0" r="10.8" fill="#3ce03c"/><circle cx="396.8" cy="197.8" r="10.8" fill="#a2a2a2"/><circle cx="418.8" cy="185.7" r="10.8" fill="#a2a2a2"/><circle cx="404.9" cy="213.7" r="10.8" fill="#a2a2a2"/><circle cx="404.9" cy="249.4" r="10.8" fill="#a3a173"/><circle cx="405.9" cy="119.3" r="10.8" fill="#f8f43a"/><circle cx="425.7" cy="144.1" r="10.8" fill="#b8407a"/><circle cx="441.2" cy="138.2" r="10.8" fill="#a2a2a2"/><circle cx="436.7" cy="167.1" r="10.8" fill="#a2a2a2"/><g font-family="Liberation Sans" font-weight="bold" font-size="10" text-anchor="middle" fill="#1a1a1a" stroke="#fff" stroke-width="3" stroke-linejoin="round" style="paint-order:stroke"><text transform="matrix(0.86 0 0 1 -1.00 217.60)">N/A</text><text transform="matrix(0.86 0 0 1 30.00 213.60)">N/A</text><text transform="matrix(0.86 0 0 1 18.60 230.40)">45</text><text transform="matrix(0.86 0 0 1 12.40 265.80)">52</text><text transform="matrix(0.86 0 0 1 183.40 155.20)">N/A</text><text transform="matrix(0.86 0 0 1 224.20 140.00)">N/A</text><text transform="matrix(0.86 0 0 1 212.40 132.10)">40</text><text transform="matrix(0.86 0 0 1 146.20 219.40)">N/A</text><text transform="matrix(0.86 0 0 1 160.70 211.60)">N/A</text><text transform="matrix(0.86 0 0 1 192.50 218.80)">126</text><text transform="matrix(0.86 0 0 1 209.90 213.40)">121</text><text transform="matrix(0.86 0 0 1 166.70 228.50)">88</text><text transform="matrix(0.86 0 0 1 175.00 228.50)">87</text><text transform="matrix(0.86 0 0 1 184.70 227.30)">91</text><text transform="matrix(0.86 0 0 1 197.30 238.70)">29</text><text transform="matrix(0.86 0 0 1 253.50 168.00)">N/A</text><text transform="matrix(0.86 0 0 1 296.30 183.60)">158</text><text transform="matrix(0.86 0 0 1 286.00 181.60)">N/A</text><text transform="matrix(0.86 0 0 1 281.10 171.70)">133</text><text transform="matrix(0.86 0 0 1 271.90 163.60)">85</text><text transform="matrix(0.86 0 0 1 276.20 184.20)">147</text><text transform="matrix(0.86 0 0 1 260.50 191.80)">117</text><text transform="matrix(0.86 0 0 1 246.80 205.60)">105</text><text transform="matrix(0.86 0 0 1 260.20 219.70)">64</text><text transform="matrix(0.86 0 0 1 245.40 238.10)">N/A</text><text transform="matrix(0.86 0 0 1 255.20 242.30)">55</text><text transform="matrix(0.86 0 0 1 278.60 280.50)">N/A</text><text transform="matrix(0.86 0 0 1 301.70 151.70)">89</text><text transform="matrix(0.86 0 0 1 323.20 142.00)">103</text><text transform="matrix(0.86 0 0 1 322.20 149.60)">90</text><text transform="matrix(0.86 0 0 1 341.60 137.10)">N/A</text><text transform="matrix(0.86 0 0 1 341.60 177.70)">351</text><text transform="matrix(0.86 0 0 1 335.70 168.00)">N/A</text><text transform="matrix(0.86 0 0 1 330.30 162.60)">195</text><text transform="matrix(0.86 0 0 1 372.50 187.10)">72</text><text transform="matrix(0.86 0 0 1 366.20 190.10)">167</text><text transform="matrix(0.86 0 0 1 359.00 177.70)">84</text><text transform="matrix(0.86 0 0 1 320.00 184.60)">161</text><text transform="matrix(0.86 0 0 1 330.80 198.10)">155</text><text transform="matrix(0.86 0 0 1 348.80 211.10)">110</text><text transform="matrix(0.86 0 0 1 344.50 200.20)">63</text><text transform="matrix(0.86 0 0 1 347.40 224.10)">29</text><text transform="matrix(0.86 0 0 1 402.50 192.60)">67</text><text transform="matrix(0.86 0 0 1 382.00 202.80)">40</text><text transform="matrix(0.86 0 0 1 396.80 200.60)">N/A</text><text transform="matrix(0.86 0 0 1 418.80 188.50)">N/A</text><text transform="matrix(0.86 0 0 1 404.90 216.50)">N/A</text><text transform="matrix(0.86 0 0 1 404.90 252.20)">N/A</text><text transform="matrix(0.86 0 0 1 405.90 122.10)">57</text><text transform="matrix(0.86 0 0 1 425.70 146.90)">202</text><text transform="matrix(0.86 0 0 1 441.20 141.00)">N/A</text><text transform="matrix(0.86 0 0 1 436.70 169.90)">N/A</text></g></svg></div>

<div id="ptip" class="abs"></div>
<div id="popup" class="abs">Bishkek<br>2021-11-04 6:00 PM<br>(LT)
<div id="ptab"><div class="h"><span style="position:absolute;left:0;width:61px;top:6px">Pollutant</span><span style="position:absolute;left:61px;width:34px;top:6px">AQI</span></div>
<div class="r"><span style="position:absolute;left:0;width:61px;top:7px">PM2.5</span><div style="position:absolute;left:61px;top:0;width:34px;height:23px;background:#ffff00;border-left:1px solid #0a2d52;color:#222;padding-top:7px">95</div></div></div>
</div>
<div class="abs sel-h" style="top:6px">Select a City</div>
<div class="abs sel" style="top:34px">Bishkek<svg class="x" width="8" height="8" viewBox="0 0 8 8"><path d="M1 1L7 7M7 1L1 7" stroke="#999" stroke-width="0.9"/></svg><span class="ar"></span></div>
<div class="abs sel-h" style="top:77px">Select a Parameter</div>
<div class="abs sel" style="top:105px">PM2.5<svg class="x" width="8" height="8" viewBox="0 0 8 8"><path d="M1 1L7 7M7 1L1 7" stroke="#999" stroke-width="0.9"/></svg><span class="ar"></span></div>
<div id="cityBox" class="abs"><div class="n">Bishkek</div></div>
<svg id="rss" class="abs" width="26" height="26" viewBox="0 0 26 26"><rect width="26" height="26" fill="#f0b445"/><circle cx="6.5" cy="19.5" r="2.6" fill="#fff"/><path d="M4.5 12.2 A9.3 9.3 0 0 1 13.8 21.5" stroke="#fff" stroke-width="2.6" fill="none"/><path d="M4.5 6.2 A15.3 15.3 0 0 1 19.8 21.5" stroke="#fff" stroke-width="2.6" fill="none"/></svg>
<div id="note" class="abs">Note: Values above 500 are considered Beyond the AQI. Follow<br>recommendations for the Hazardous category. Additional<br>information on reducing exposure to extremely high levels of particle<br>pollution is available <a>here</a>.</div>

<div id="tab1" class="abs tab">AQI</div>
<div class="abs tab" style="left:96px;width:125px">Concentration</div>
<div class="abs tab" style="left:223px;width:104px">Historical</div>
<div id="tabline" class="abs"></div>
<div id="learn" class="abs">Learn more about how the Air Quality Index [AQI] is calculated from the EPA <a>here</a>.</div>

<div id="chart" class="abs"><svg width="596" height="289" viewBox="0 0 596 289" style="position:absolute;left:0;top:0"><text x="297.5" y="18" text-anchor="middle" font-family="Liberation Sans" font-size="14.6" letter-spacing="0.1" fill="#333">Bishkek - PM2.5</text><rect x="56.0" y="155.34" width="533.0" height="1" fill="#e6e6e6"/><rect x="56.0" y="127.98" width="533.0" height="1" fill="#e6e6e6"/><rect x="56.0" y="100.62" width="533.0" height="1" fill="#e6e6e6"/><rect x="56.0" y="73.26" width="533.0" height="1" fill="#e6e6e6"/><rect x="56.0" y="45.90" width="533.0" height="1" fill="#e6e6e6"/><g font-family="Liberation Sans" font-size="9" fill="#222" text-anchor="end"><text x="45" y="184.7">0</text><text x="45" y="157.3">100</text><text x="45" y="130.0">200</text><text x="45" y="102.6">300</text><text x="45" y="75.3">400</text><text x="45" y="47.9">500</text></g><text transform="translate(21.2,111.5) rotate(-90)" text-anchor="middle" font-family="Liberation Sans" font-size="9.3" fill="#222">AQI</text><rect x="61.4" y="159.9" width="11.5" height="23.3" fill="#ffff00" stroke="#333" stroke-width="1"/><rect x="83.6" y="147.1" width="11.5" height="36.1" fill="#ff7e00" stroke="#333" stroke-width="1"/><rect x="105.8" y="153.7" width="11.5" height="29.5" fill="#ff7e00" stroke="#333" stroke-width="1"/><rect x="128.0" y="158.0" width="11.5" height="25.2" fill="#ffff00" stroke="#333" stroke-width="1"/><rect x="150.2" y="162.1" width="11.5" height="21.1" fill="#ffff00" stroke="#333" stroke-width="1"/><rect x="172.4" y="161.3" width="11.5" height="21.9" fill="#ffff00" stroke="#333" stroke-width="1"/><rect x="194.6" y="162.1" width="11.5" height="21.1" fill="#ffff00" stroke="#333" stroke-width="1"/><rect x="216.8" y="164.0" width="11.5" height="19.2" fill="#ffff00" stroke="#333" stroke-width="1"/><rect x="239.0" y="167.1" width="11.5" height="16.1" fill="#ffff00" stroke="#333" stroke-width="1"/><rect x="261.2" y="168.2" width="11.5" height="15.0" fill="#ffff00" stroke="#333" stroke-width="1"/><rect x="283.4" y="168.7" width="11.5" height="14.5" fill="#ffff00" stroke="#333" stroke-width="1"/><rect x="305.6" y="172.5" width="11.5" height="10.7" fill="#00e400" stroke="#333" stroke-width="1"/><rect x="327.9" y="173.9" width="11.5" height="9.3" fill="#00e400" stroke="#333" stroke-width="1"/><rect x="350.1" y="173.1" width="11.5" height="10.1" fill="#00e400" stroke="#333" stroke-width="1"/><rect x="372.3" y="170.9" width="11.5" height="12.3" fill="#00e400" stroke="#333" stroke-width="1"/><rect x="394.5" y="171.7" width="11.5" height="11.5" fill="#00e400" stroke="#333" stroke-width="1"/><rect x="416.7" y="167.6" width="11.5" height="15.6" fill="#ffff00" stroke="#333" stroke-width="1"/><rect x="438.9" y="164.6" width="11.5" height="18.6" fill="#ffff00" stroke="#333" stroke-width="1"/><rect x="461.1" y="164.6" width="11.5" height="18.6" fill="#ffff00" stroke="#333" stroke-width="1"/><rect x="483.3" y="164.0" width="11.5" height="19.2" fill="#ffff00" stroke="#333" stroke-width="1"/><rect x="505.5" y="161.9" width="11.5" height="21.3" fill="#ffff00" stroke="#333" stroke-width="1"/><rect x="527.7" y="161.0" width="11.5" height="22.2" fill="#ffff00" stroke="#333" stroke-width="1"/><rect x="549.9" y="159.4" width="11.5" height="23.8" fill="#ffff00" stroke="#333" stroke-width="1"/><rect x="572.1" y="157.2" width="11.5" height="26.0" fill="#ffff00" stroke="#333" stroke-width="1"/><rect x="56.0" y="182.7" width="533.0" height="1" fill="#ccd6eb"/><rect x="55.5" y="183.2" width="1" height="7" fill="#ccd6eb"/><rect x="77.7" y="183.2" width="1" height="7" fill="#ccd6eb"/><rect x="99.9" y="183.2" width="1" height="7" fill="#ccd6eb"/><rect x="122.1" y="183.2" width="1" height="7" fill="#ccd6eb"/><rect x="144.3" y="183.2" width="1" height="7" fill="#ccd6eb"/><rect x="166.5" y="183.2" width="1" height="7" fill="#ccd6eb"/><rect x="188.8" y="183.2" width="1" height="7" fill="#ccd6eb"/><rect x="211.0" y="183.2" width="1" height="7" fill="#ccd6eb"/><rect x="233.2" y="183.2" width="1" height="7" fill="#ccd6eb"/><rect x="255.4" y="183.2" width="1" height="7" fill="#ccd6eb"/><rect x="277.6" y="183.2" width="1" height="7" fill="#ccd6eb"/><rect x="299.8" y="183.2" width="1" height="7" fill="#ccd6eb"/><rect x="322.0" y="183.2" width="1" height="7" fill="#ccd6eb"/><rect x="344.2" y="183.2" width="1" height="7" fill="#ccd6eb"/><rect x="366.4" y="183.2" width="1" height="7" fill="#ccd6eb"/><rect x="388.6" y="183.2" width="1" height="7" fill="#ccd6eb"/><rect x="410.8" y="183.2" width="1" height="7" fill="#ccd6eb"/><rect x="433.0" y="183.2" width="1" height="7" fill="#ccd6eb"/><rect x="455.2" y="183.2" width="1" height="7" fill="#ccd6eb"/><rect x="477.5" y="183.2" width="1" height="7" fill="#ccd6eb"/><rect x="499.7" y="183.2" width="1" height="7" fill="#ccd6eb"/><rect x="521.9" y="183.2" width="1" height="7" fill="#ccd6eb"/><rect x="544.1" y="183.2" width="1" height="7" fill="#ccd6eb"/><rect x="566.3" y="183.2" width="1" height="7" fill="#ccd6eb"/><rect x="588.5" y="183.2" width="1" height="7" fill="#ccd6eb"/><g font-family="Liberation Sans" font-size="8.3" letter-spacing="0.35" fill="#555" text-anchor="end"><text transform="translate(68.7,195.2) rotate(-45)">7 PM</text><text transform="translate(90.9,195.2) rotate(-45)">8 PM</text><text transform="translate(113.1,195.2) rotate(-45)">9 PM</text><text transform="translate(135.3,195.2) rotate(-45)">10 PM</text><text transform="translate(157.5,195.2) rotate(-45)">11 PM</text><text transform="translate(179.7,195.2) rotate(-45)">Nov 04, 2021 12 AM</text><text transform="translate(202.0,195.2) rotate(-45)">1 AM</text><text transform="translate(224.2,195.2) rotate(-45)">2 AM</text><text transform="translate(246.4,195.2) rotate(-45)">3 AM</text><text transform="translate(268.6,195.2) rotate(-45)">4 AM</text><text transform="translate(290.8,195.2) rotate(-45)">5 AM</text><text transform="translate(313.0,195.2) rotate(-45)">6 AM</text><text transform="translate(335.2,195.2) rotate(-45)">7 AM</text><text transform="translate(357.4,195.2) rotate(-45)">8 AM</text><text transform="translate(379.6,195.2) rotate(-45)">9 AM</text><text transform="translate(401.8,195.2) rotate(-45)">10 AM</text><text transform="translate(424.0,195.2) rotate(-45)">11 AM</text><text transform="translate(446.2,195.2) rotate(-45)">12 PM</text><text transform="translate(468.5,195.2) rotate(-45)">1 PM</text><text transform="translate(490.7,195.2) rotate(-45)">2 PM</text><text transform="translate(512.9,195.2) rotate(-45)">3 PM</text><text transform="translate(535.1,195.2) rotate(-45)">4 PM</text><text transform="translate(557.3,195.2) rotate(-45)">5 PM</text><text transform="translate(579.5,195.2) rotate(-45)">6 PM</text></g><rect x="281" y="271.5" width="12" height="9" fill="#cccccc"/><text x="297" y="279.8" font-family="Liberation Sans" font-weight="bold" font-size="8.8" fill="#333">AQI</text></svg></div>

<div id="cc" class="abs">
  <div id="cch"><div style="font-size:11.2px;padding-top:5px">Current Conditions</div><div style="font-size:9px;padding-top:5.5px">observed at</div><div style="font-size:11.2px;padding-top:4.5px">Nov 4, 2021 6:00 PM (LT)</div></div>
  <div id="ccy">95 AQI<br>Moderate<br>PM2.5</div>
  <div id="hm"><div style="text-align:center;font-weight:bold;padding-top:5px;line-height:16px">Health Message</div><div style="line-height:16px;margin-top:3px">The AQI is between 51 and 100. Air quality<br>is acceptable; however, pollution in this<br>range may pose a moderate health concern<br>for a very small number of individuals.<br>People who are unusually sensitive to ozone<br>or particle pollution may experience<br>respiratory symptoms.</div></div>
</div>
</body></html>
